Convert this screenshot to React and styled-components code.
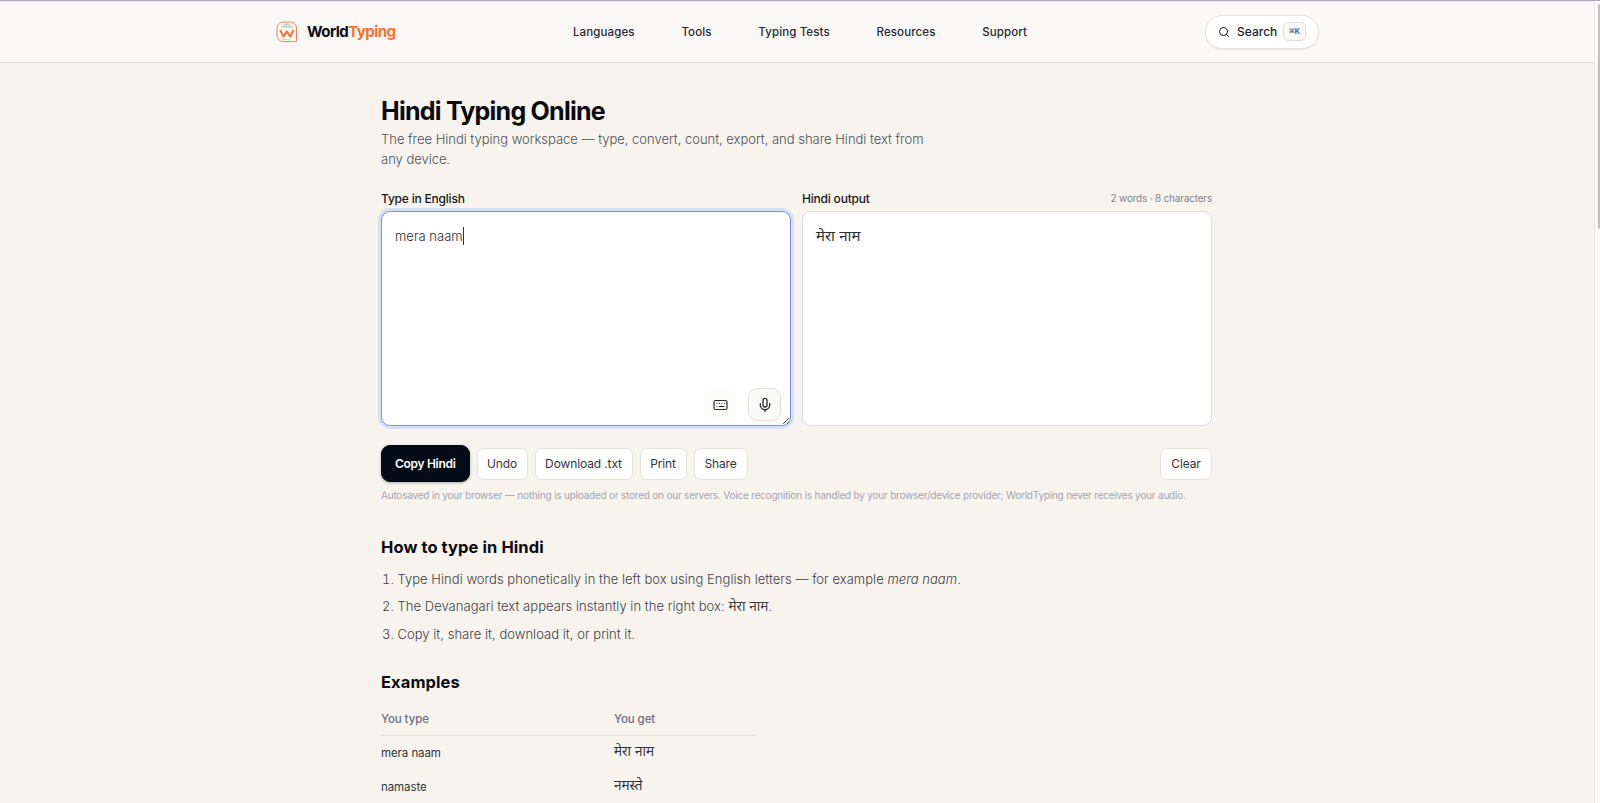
import { useState } from 'react';
import styled, { createGlobalStyle } from 'styled-components';
import { Search, Mic } from 'lucide-react';

const GlobalStyle = createGlobalStyle`
    * {
        box-sizing: border-box;
    }
    body {
        margin: 0;
        background: #f7f4ed;
        font-family: Inter, "Noto Sans Devanagari", "Noto Sans", sans-serif;
        color: #1f2230;
        overflow: hidden;
    }
    h1, h2, p, ol {
        margin: 0;
        padding: 0;
    }
    button, textarea {
        font-family: inherit;
    }
`

const Page = styled.div`
    display: flex;
    height: 803px;
    border-top: 1px solid #a9a4c4;
    overflow: hidden;
`

const Body = styled.div`
    flex: 1;
`

const Scrollbar = styled.div`
    width: 6px;
    padding: 3px 0 0 3px;
    background: #fafafa;
    border-left: 1px solid #ebe9e5;
`

const Thumb = styled.div`
    height: 225px;
    background: #bfbfbf;
    border-radius: 3px 0 0 3px;
`

const Header = styled.header`
    height: 62px;
    padding: 0 275px 0 276px;
    background: #faf9f7;
    border-bottom: 1px solid #dcdbd9;
    box-shadow: inset 0 1px 0 #e6e4ee;
    display: flex;
    align-items: center;
    justify-content: space-between;
`

const Brand = styled.div`
    display: flex;
    align-items: center;
    gap: 9px;
    width: 297px;
    font-size: 15px;
    font-weight: 700;
    letter-spacing: -0.53px;
    color: #0a0a0f;
    span span {
        color: #f9722e;
    }
`

const Nav = styled.nav`
    display: flex;
    flex: 1;
    gap: 46.7px;
    font-size: 11.5px;
    font-weight: 500;
    letter-spacing: 0.12px;
    color: #262733;
`

const SearchPill = styled.div`
    display: flex;
    align-items: center;
    height: 34px;
    width: 114px;
    padding: 0 12px;
    background: #ffffff;
    border: 1px solid #e6e4e0;
    border-radius: 17px;
    box-shadow: 0 1px 2px rgba(0, 0, 0, 0.08);
    font-size: 12px;
    font-weight: 500;
    color: #1b1d2a;
    svg {
        margin-right: 7px;
    }
`

const Kbd = styled.kbd`
    margin-left: auto;
    width: 23px;
    height: 19px;
    border: 1px solid #e3e1dc;
    border-radius: 5px;
    background: #faf9f6;
    color: #6b6b8a;
    font: 600 9px/18px "Liberation Mono", "DejaVu Sans Mono", monospace;
    letter-spacing: -0.1px;
    text-align: center;
`

const Main = styled.main`
    width: 831px;
    margin-left: 381px;
    padding-top: 33px;
`

const Title = styled.h1`
    font-size: 25px;
    line-height: 30px;
    font-weight: 700;
    letter-spacing: -0.76px;
    color: #08080f;
`

const Lead = styled.p`
    width: 560px;
    margin-top: 3px;
    font-size: 13px;
    font-weight: 350;
    line-height: 20px;
    letter-spacing: -0.015px;
    color: #4c505c;
`

const Panes = styled.div`
    display: grid;
    grid-template-columns: 410px 410px;
    gap: 11px;
    margin-top: 20px;
`

const PaneHead = styled.div`
    display: flex;
    justify-content: space-between;
    align-items: center;
    height: 18px;
    margin-bottom: 4px;
    font-size: 12px;
    font-weight: 500;
    letter-spacing: -0.2px;
    color: #17171f;
`

const Count = styled.span`
    font-size: 10px;
    font-weight: 400;
    color: #83838c;
`

const Box = styled.div`
    position: relative;
    height: 215px;
    padding: 15px 13px;
    background: #ffffff;
    border: 1px solid ${(props) => (props.$focused ? '#7f90ea' : '#dddde6')};
    border-radius: 9px;
    box-shadow: ${(props) => (props.$focused ? '0 0 0 3px #d5e0f3' : 'none')};
    font-size: 13px;
    font-weight: 350;
    line-height: 18px;
    color: #2c2d35;
`

const Typed = styled.span`
    display: inline-block;
    border-right: 1px solid #33343c;
`

const Hindi = styled.span`
    font-size: ${(props) => props.$size || 13.5}px;
    font-weight: 400;
    letter-spacing: 0;
    line-height: 1;
`

const Tools = styled.div`
    position: absolute;
    right: 9px;
    bottom: 4px;
    display: flex;
    gap: 11px;
`

const ToolButton = styled.button`
    display: grid;
    place-items: center;
    width: 33px;
    height: 33px;
    padding: 0;
    border: 1px solid ${(props) => (props.$outlined ? '#e2e0dc' : '#fcfcfa')};
    border-radius: 9px;
    background: ${(props) => (props.$outlined ? '#fafaf8' : '#fcfcfa')};
    color: #2b2c36;
`

const Grip = styled.svg`
    position: absolute;
    right: 0;
    bottom: 0;
`

const Actions = styled.div`
    display: flex;
    align-items: center;
    gap: 7px;
    height: 37px;
    margin-top: 19px;
`

const Button = styled.button`
    height: ${(props) => (props.$primary ? 37 : 32)}px;
    width: ${(props) => props.$width}px;
    padding: 0;
    border: 1px solid ${(props) => (props.$primary ? '#030b17' : '#e6e3dd')};
    border-radius: ${(props) => (props.$primary ? 9 : 7)}px;
    background: ${(props) => (props.$primary ? '#030b17' : '#ffffff')};
    color: ${(props) => (props.$primary ? '#ffffff' : '#33343f')};
    font-size: 12px;
    font-weight: ${(props) => (props.$primary ? 600 : 400)};
    letter-spacing: ${(props) => (props.$primary ? -0.3 : -0.12)}px;
    white-space: nowrap;
    box-shadow: ${(props) => (props.$primary ? '0 1px 3px rgba(3, 11, 23, 0.3)' : 'none')};
    &:last-child {
        margin-left: auto;
    }
`

const Note = styled.p`
    margin-top: 6px;
    font-size: 10px;
    line-height: 14px;
    letter-spacing: -0.21px;
    white-space: nowrap;
    color: #a5a4b2;
`

const Heading = styled.h2`
    margin-top: ${(props) => props.$top}px;
    font-size: 16.5px;
    line-height: 22px;
    font-weight: 700;
    letter-spacing: 0.08px;
    color: #0b0b12;
`

const Steps = styled.ol`
    margin-top: 8px;
    padding-left: 16.5px;
    font-size: 13px;
    font-weight: 350;
    letter-spacing: 0.035px;
    color: #3e404a;
    li {
        height: 27.4px;
        line-height: 27.4px;
        white-space: nowrap;
    }
`

const Table = styled.div`
    display: grid;
    grid-template-columns: 233px 142px;
    width: 375px;
    margin-top: 11px;
    font-size: 11.5px;
    letter-spacing: -0.08px;
    color: #33343b;
`

const Cell = styled.div`
    height: ${(props) => (props.$head ? 31.5 : 34)}px;
    line-height: ${(props) => (props.$head ? 31 : 34)}px;
    border-bottom: ${(props) => (props.$head ? '1px solid #e2e0da' : 'none')};
    color: ${(props) => (props.$head ? '#6d6d88' : 'inherit')};
    font-weight: ${(props) => (props.$head ? 500 : 400)};
`

const HindiCell = styled(Cell)`
    line-height: 32px;
`

const links = ['Languages', 'Tools', 'Typing Tests', 'Resources', 'Support'];

const examples = [
    { typed: 'mera naam', output: 'मेरा नाम' },
    { typed: 'namaste', output: 'नमस्ते' },
];

const Logo = () => (
    <svg width="22" height="22" viewBox="0 0 22 22" fill="none">
        <path d="M20.500 20.600H7A6 6 0 0 1 1 14.600V7a6 6 0 0 1 6-6h7.500a6 6 0 0 1 6 6z" stroke="#f5825f" />
        <path d="M5 7.500C6 4.200 8.200 3 10.800 3s4.800 1.200 5.800 4.500M5.500 5.800h10.600M10.800 3v4M8 7.500c.3-2.500 1.300-4 2.800-4.500 1.500.5 2.500 2 2.800 4.500" stroke="#a9bfb0" strokeWidth="0.7" />
        <path d="M4.200 9l3.200 6.800 3.400-5.600 3.400 5.600L17.400 9" stroke="#f9722e" strokeWidth="1.900" strokeLinejoin="round" />
        <path d="M7.500 18.700h6.500" stroke="#b5bdb8" strokeDasharray="1.500 0.700" />
    </svg>
)

const KeyboardIcon = () => (
    <svg width="15" height="12" viewBox="0 0 15 12" fill="none" stroke="currentColor">
        <rect x="1" y="1.500" width="13" height="9" rx="1.500" strokeWidth="1.200" />
        <path d="M3.500 4.500h1M6 4.500h1M8.500 4.500h1M11 4.500h1M3.500 7.500h1M6 7.500h5.500" />
    </svg>
)

const App = () => {
    const [text] = useState('mera naam');

    return (
        <Page>
            <GlobalStyle />
            <Body>
                <Header>
                    <Brand><Logo /><span>World<span>Typing</span></span></Brand>
                    <Nav>
                        {links.map((link) => <span key={link}>{link}</span>)}
                    </Nav>
                    <SearchPill>
                        <Search size={12} strokeWidth={2} />
                        Search
                        <Kbd>⌘K</Kbd>
                    </SearchPill>
                </Header>
                <Main>
                    <Title>Hindi Typing Online</Title>
                    <Lead>The free Hindi typing workspace — type, convert, count, export, and share Hindi text from any device.</Lead>
                    <Panes>
                        <div>
                            <PaneHead>Type in English</PaneHead>
                            <Box $focused>
                                <Typed>{text}</Typed>
                                <Tools>
                                    <ToolButton><KeyboardIcon /></ToolButton>
                                    <ToolButton $outlined><Mic size={16} strokeWidth={2} /></ToolButton>
                                </Tools>
                                <Grip width="8" height="8" stroke="#55565e"><path d="M1 7l6-6M5 7l2-2" /></Grip>
                            </Box>
                        </div>
                        <div>
                            <PaneHead>Hindi output<Count>2 words · 8 characters</Count></PaneHead>
                            <Box><Hindi $size={15}>मेरा नाम</Hindi></Box>
                        </div>
                    </Panes>
                    <Actions>
                        <Button $primary $width={88.5}>Copy Hindi</Button>
                        <Button $width={51}>Undo</Button>
                        <Button $width={98}>Download .txt</Button>
                        <Button $width={47}>Print</Button>
                        <Button $width={54}>Share</Button>
                        <Button $width={52}>Clear</Button>
                    </Actions>
                    <Note>Autosaved in your browser — nothing is uploaded or stored on our servers. Voice recognition is handled by your browser/device provider; WorldTyping never receives your audio.</Note>
                    <Heading $top={34}>How to type in Hindi</Heading>
                    <Steps>
                        <li>Type Hindi words phonetically in the left box using English letters — for example <em>mera naam</em>.</li>
                        <li>The Devanagari text appears instantly in the right box: <Hindi>मेरा नाम</Hindi>.</li>
                        <li>Copy it, share it, download it, or print it.</li>
                    </Steps>
                    <Heading $top={23}>Examples</Heading>
                    <Table>
                        <Cell $head>You type</Cell>
                        <Cell $head>You get</Cell>
                        {examples.map(({ typed, output }) => [
                            <Cell key={typed}>{typed}</Cell>,
                            <HindiCell key={output}><Hindi>{output}</Hindi></HindiCell>,
                        ])}
                    </Table>
                </Main>
            </Body>
            <Scrollbar><Thumb /></Scrollbar>
        </Page>
    )
}

export default App
